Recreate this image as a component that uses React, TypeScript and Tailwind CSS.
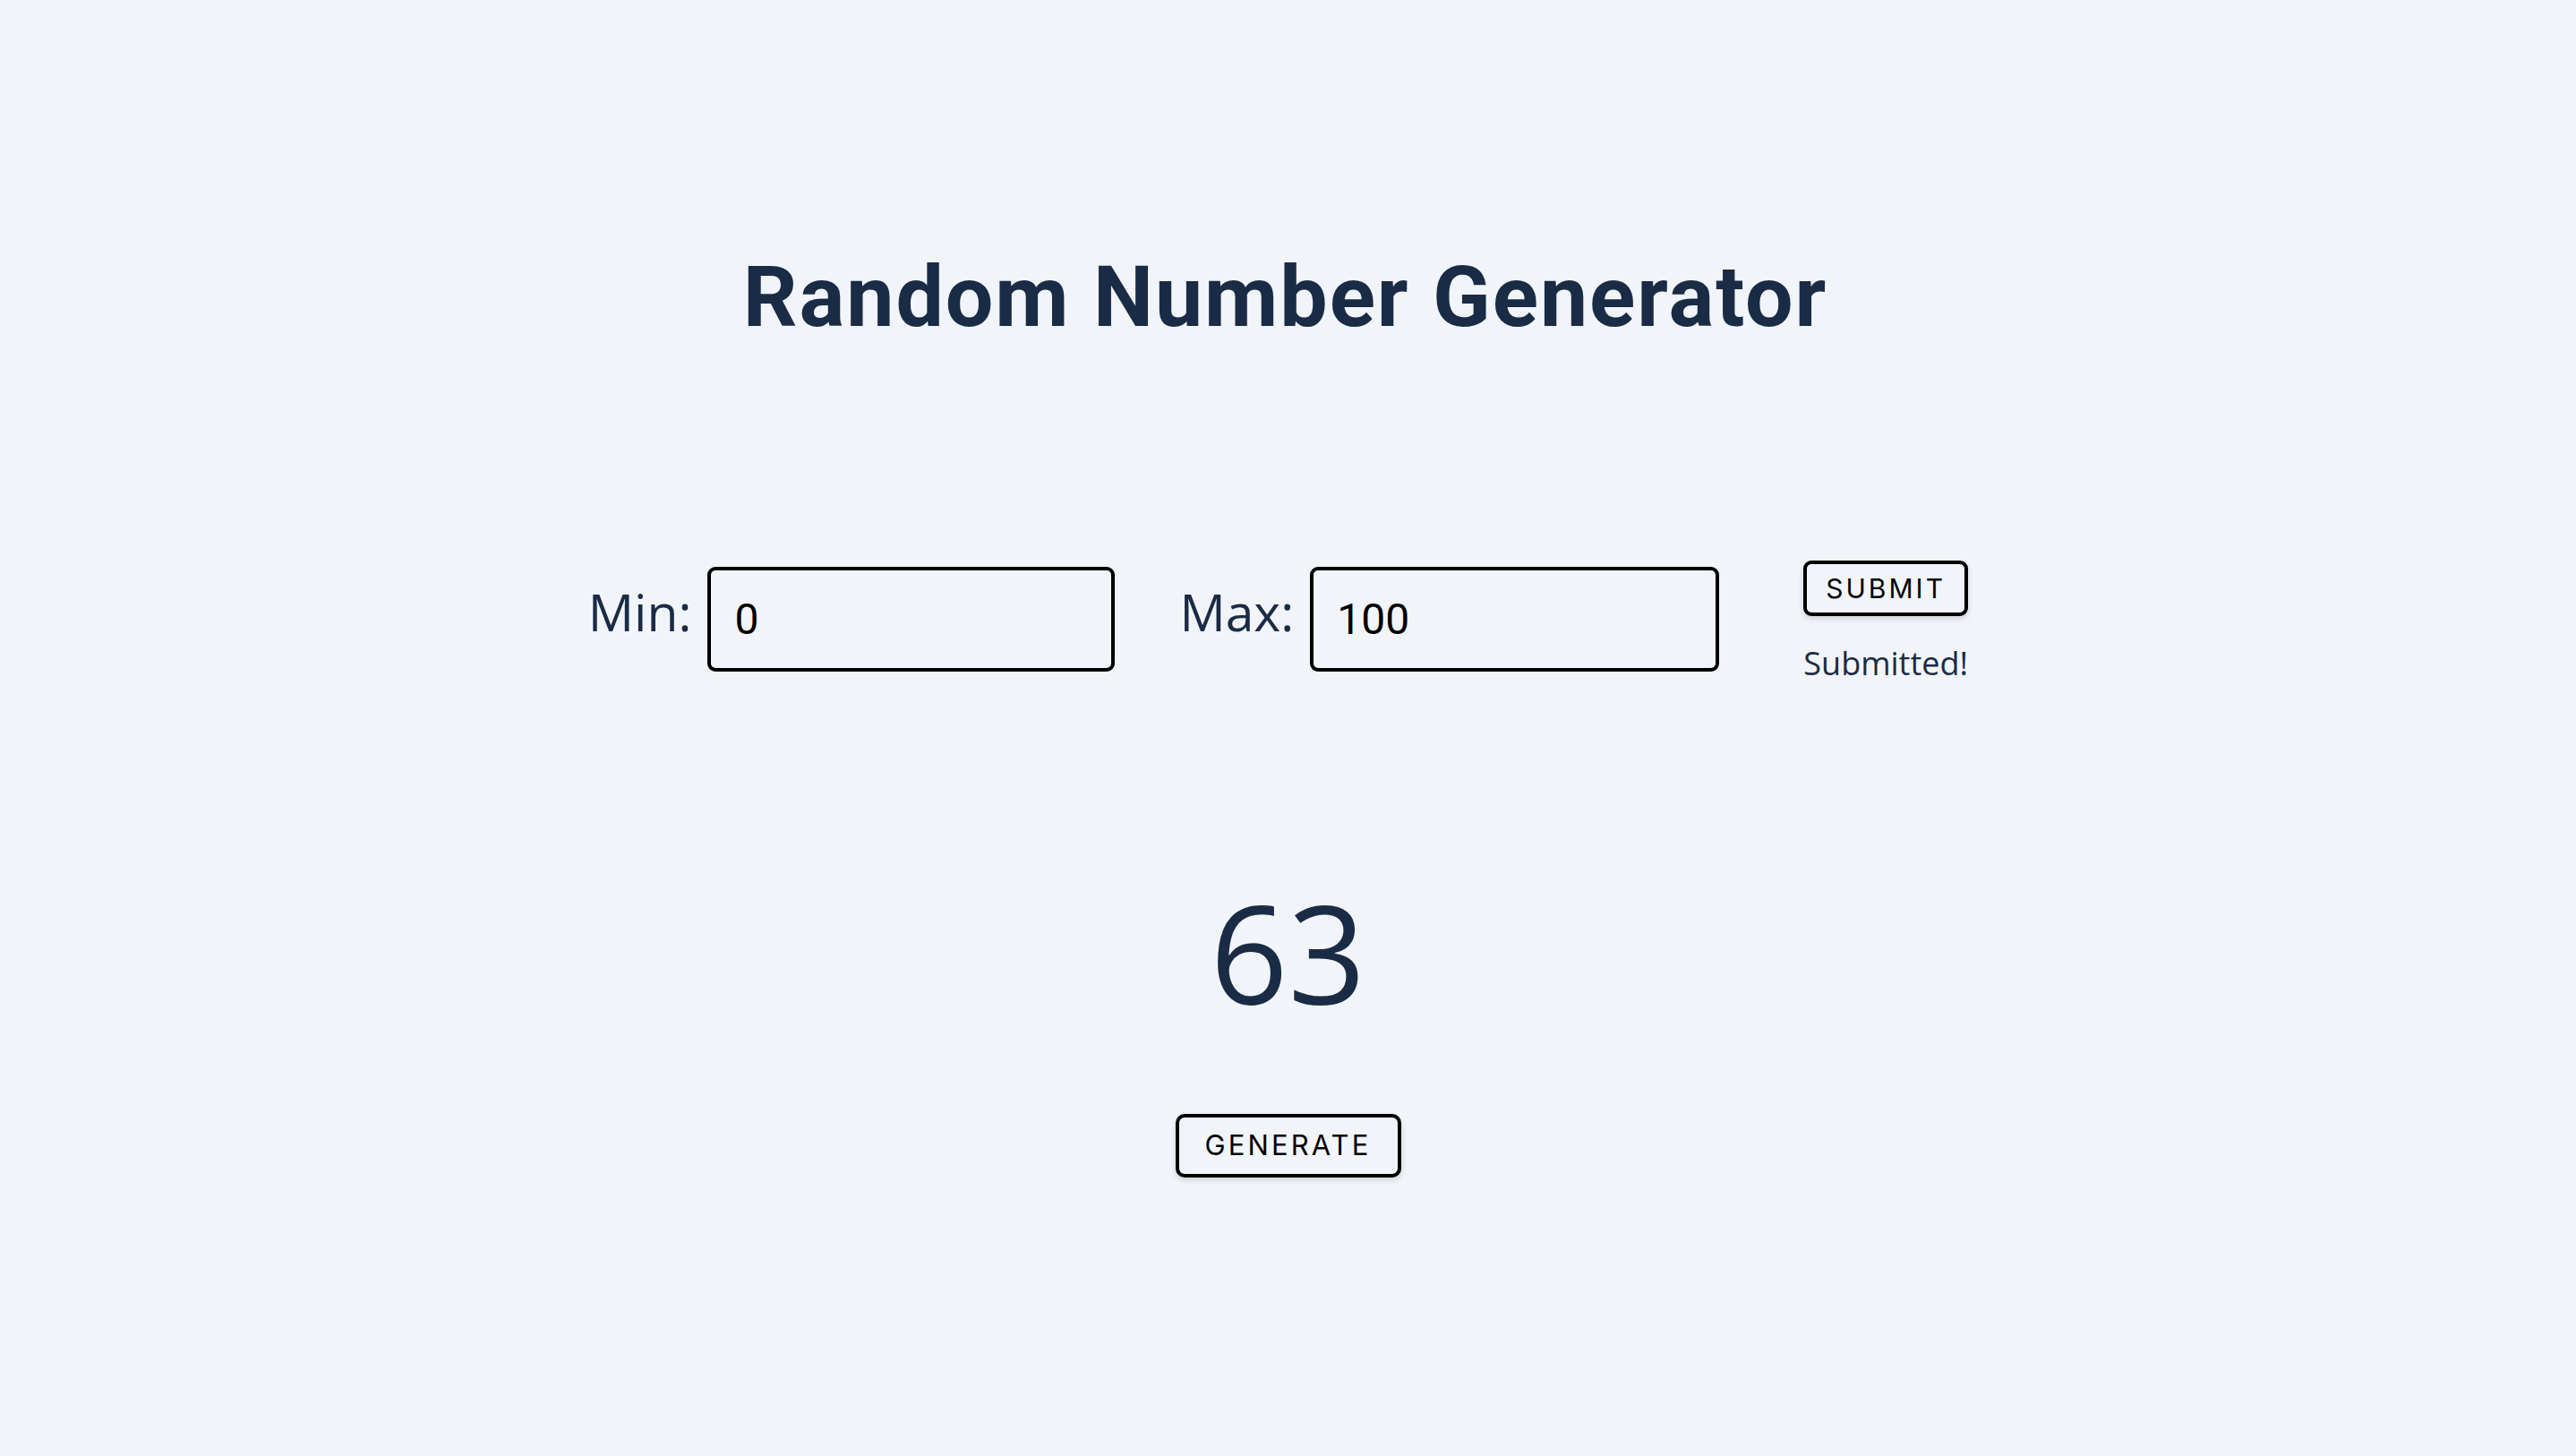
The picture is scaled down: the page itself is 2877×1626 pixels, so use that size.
export default function App() {
  return (
    <div className="min-h-screen bg-[#f1f5f9] flex flex-col items-center text-[#1a2b45]">
      <h1 className="mt-[284px] mr-[6px] text-[95px] leading-none font-bold tracking-[0.02em] font-['Roboto',sans-serif]">
        Random Number Generator
      </h1>

      <div className="mt-[254px] flex items-start ml-[-22px]">
        <div className="flex items-center">
          <label className="text-[57px] font-['Open_Sans',sans-serif] mr-[18px] mt-[-16px]">Min:</label>
          <input
            defaultValue="0"
            className="w-[455px] h-[117px] border-4 border-black rounded-[9px] bg-transparent px-[26px] text-[48px] text-black font-['Roboto',sans-serif] outline-none"
          />
        </div>
        <div className="flex items-center ml-[72px]">
          <label className="text-[57px] font-['Open_Sans',sans-serif] mr-[18px] mt-[-16px]">Max:</label>
          <input
            defaultValue="100"
            className="w-[457px] h-[117px] border-4 border-black rounded-[9px] bg-transparent px-[26px] text-[48px] text-black font-['Roboto',sans-serif] outline-none"
          />
        </div>
        <div className="flex flex-col items-center ml-[94px] mt-[-7px]">
          <button className="w-[184px] h-[62px] border-4 border-black rounded-[9px] bg-transparent text-[30px] text-black tracking-[0.1em] font-['Inter',sans-serif] shadow-[0_3px_6px_rgba(0,0,0,0.15)]">
            SUBMIT
          </button>
          <p className="mt-[26px] text-[36px] font-['Open_Sans',sans-serif]">Submitted!</p>
        </div>
      </div>

      <div className="mt-[220px] text-[152px] leading-none font-['Open_Sans',sans-serif]">63</div>

      <button className="mt-[104px] w-[252px] h-[71px] border-4 border-black rounded-[10px] bg-transparent text-[31px] text-black tracking-[0.1em] font-['Inter',sans-serif] shadow-[0_3px_6px_rgba(0,0,0,0.15)]">
        GENERATE
      </button>
    </div>
  );
}
